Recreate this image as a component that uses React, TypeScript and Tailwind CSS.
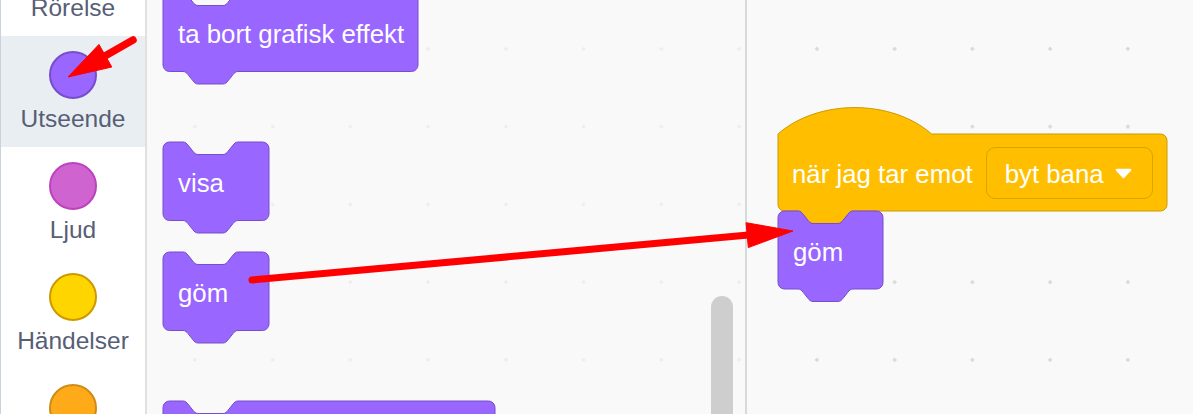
const R = 6.5;
const NOTCH_X = 20;

const NOTCH_RIGHT =
  'c 2.5 0 3.75 1.56 5 3.12 l 5 6.25 c 1.25 1.56 2.5 3.12 5 3.12 h 25 c 2.5 0 3.75 -1.56 5 -3.12 l 5 -6.25 c 1.25 -1.56 2.5 -3.12 5 -3.12';
const TAB_LEFT =
  'c -2.5 0 -3.75 1.56 -5 3.12 l -5 6.25 c -1.25 1.56 -2.5 3.12 -5 3.12 h -25 c -2.5 0 -3.75 -1.56 -5 -3.12 l -5 -6.25 c -1.25 -1.56 -2.5 -3.12 -5 -3.12';

function bottomPath(w: number, y: number) {
  return `V ${y - R} A ${R} ${R} 0 0 1 ${w - R} ${y} H ${NOTCH_X + 55} ${TAB_LEFT} H ${R} A ${R} ${R} 0 0 1 0 ${y - R}`;
}

function stackPath(w: number, h: number) {
  return `M 0 ${R} A ${R} ${R} 0 0 1 ${R} 0 H ${NOTCH_X} ${NOTCH_RIGHT} H ${w - R} A ${R} ${R} 0 0 1 ${w} ${R} ${bottomPath(w, h)} Z`;
}

function hatPath(w: number, dome: number, h: number) {
  return `M 0 ${dome} c 40 -35.2 113.6 -35.2 153.6 0 H ${w - R} A ${R} ${R} 0 0 1 ${w} ${dome + R} ${bottomPath(w, dome + h)} Z`;
}

const FONT = "font-['Liberation_Sans',Arial,sans-serif]";

function LooksBlock({ label, width, height = 78.5, className = '' }: { label: string; width: number; height?: number; className?: string }) {
  return (
    <div className={`relative shrink-0 ${className}`} style={{ width, height }}>
      <svg className="absolute left-0 top-0 overflow-visible" width={width} height={height + 13}>
        <path d={stackPath(width, height)} fill="#9966FF" stroke="#774DCB" strokeWidth={1} />
      </svg>
      <div className={`relative flex h-full items-center pl-[15px] pt-[6px] text-[25.8px] leading-none text-white ${FONT}`}>
        {label}
      </div>
    </div>
  );
}

const categories = [
  { name: 'Rörelse', fill: '#4C97FF', stroke: '#3373CC' },
  { name: 'Utseende', fill: '#9966FF', stroke: '#774DCB', active: true },
  { name: 'Ljud', fill: '#CF63CF', stroke: '#BD42BD' },
  { name: 'Händelser', fill: '#FFD500', stroke: '#CC9900' },
  { name: 'Kontroll', fill: '#FFAB19', stroke: '#CF8B17' },
];

function Arrow({ x1, y1, x2, y2, head = 44, half = 13, width = 7 }: { x1: number; y1: number; x2: number; y2: number; head?: number; half?: number; width?: number }) {
  const len = Math.hypot(x2 - x1, y2 - y1);
  const ux = (x2 - x1) / len;
  const uy = (y2 - y1) / len;
  const bx = x2 - ux * head;
  const by = y2 - uy * head;
  const nx = -uy;
  const ny = ux;
  return (
    <g fill="#FF0000" stroke="#FF0000">
      <line x1={x1} y1={y1} x2={bx + ux * 4} y2={by + uy * 4} strokeWidth={width} strokeLinecap="round" />
      <polygon
        points={`${x2},${y2} ${bx + nx * half},${by + ny * half} ${bx - nx * half},${by - ny * half}`}
        strokeWidth={1}
        strokeLinejoin="round"
      />
    </g>
  );
}

export default function App() {
  return (
    <div className="relative flex h-[414px] w-[1193px] overflow-hidden bg-white">
      {/* category menu */}
      <div className="h-[414px] w-[147px] shrink-0 overflow-hidden border-l border-r-2 border-l-[#c9d2dc] border-r-[#e0e0e0] bg-white">
        <div className="-mt-[75px] flex flex-col">
          {categories.map((c) => (
            <div
              key={c.name}
              className={`flex h-[111px] flex-col items-center pt-[15px] ${c.active ? 'bg-[#e9eef2]' : ''}`}
            >
              <div
                className="h-[48px] w-[48px] rounded-full border-2"
                style={{ backgroundColor: c.fill, borderColor: c.stroke }}
              />
              <div className={`mt-[6px] text-[24.5px] leading-[28px] text-[#575e75] ${FONT}`}>{c.name}</div>
            </div>
          ))}
        </div>
      </div>

      {/* block palette */}
      <div className="relative w-[598px] shrink-0 bg-[#f9f9f9] bg-[radial-gradient(circle,#ececec_1.4px,transparent_1.9px)] bg-[length:77.75px_77.75px] bg-[position:9px_10px]">
        <div className="flex flex-col pl-[16px]">
          <LooksBlock label="ta bort grafisk effekt" width={255} className="-mt-[7px]" />
          <LooksBlock label="visa" width={106} className="mt-[70.5px]" />
          <LooksBlock label="göm" width={106} className="mt-[31.5px]" />
          <LooksBlock label="" width={332} className="mt-[70px]" />
        </div>
        <div className="absolute left-[564px] top-[296px] h-[140px] w-[22px] rounded-t-full bg-[#cecece]" />
      </div>

      <div className="w-[2px] shrink-0 bg-[#d9d9d9]" />

      {/* script area */}
      <div className="relative flex-1 bg-[#f9f9f9] bg-[radial-gradient(circle,#d9d9d9_1.5px,transparent_2px)] bg-[length:77.75px_77.75px] bg-[position:31px_10px]">
        <div className="absolute left-[31px] top-[107px] flex flex-col">
          <div className="relative w-[389px] pt-[27px]">
            <svg className="absolute left-0 top-0 overflow-visible" width={389} height={27 + 77 + 13}>
              <path d={hatPath(389, 27, 77)} fill="#FFBF00" stroke="#CC9900" strokeWidth={1} />
            </svg>
            <div className={`relative flex h-[77px] items-center pl-[14px] text-[25.8px] leading-none text-white ${FONT}`}>
              <span className="pt-[5px]">när jag tar emot</span>
              <div className="ml-[13px] flex h-[52px] w-[167px] items-center justify-between rounded-[9px] border border-[#d9a400] pl-[18px] pr-[20px]">
                <span className="pt-[5px]">byt bana</span>
                <svg width="17" height="11" viewBox="0 0 17 11" className="mt-[2px]">
                  <path d="M2 2 L15 2 L8.5 9 Z" fill="#fff" stroke="#fff" strokeWidth={2.5} strokeLinejoin="round" />
                </svg>
              </div>
            </div>
          </div>
          <LooksBlock label="göm" width={105} height={78} className="-mt-[0.5px]" />
        </div>
      </div>

      {/* annotations */}
      <svg className="pointer-events-none absolute left-0 top-0" width={1193} height={414}>
        <Arrow x1={133} y1={40} x2={68} y2={77} head={43} half={13} width={7.5} />
        <Arrow x1={252} y1={280} x2={793} y2={231} head={46} half={12.5} width={7} />
      </svg>
    </div>
  );
}
